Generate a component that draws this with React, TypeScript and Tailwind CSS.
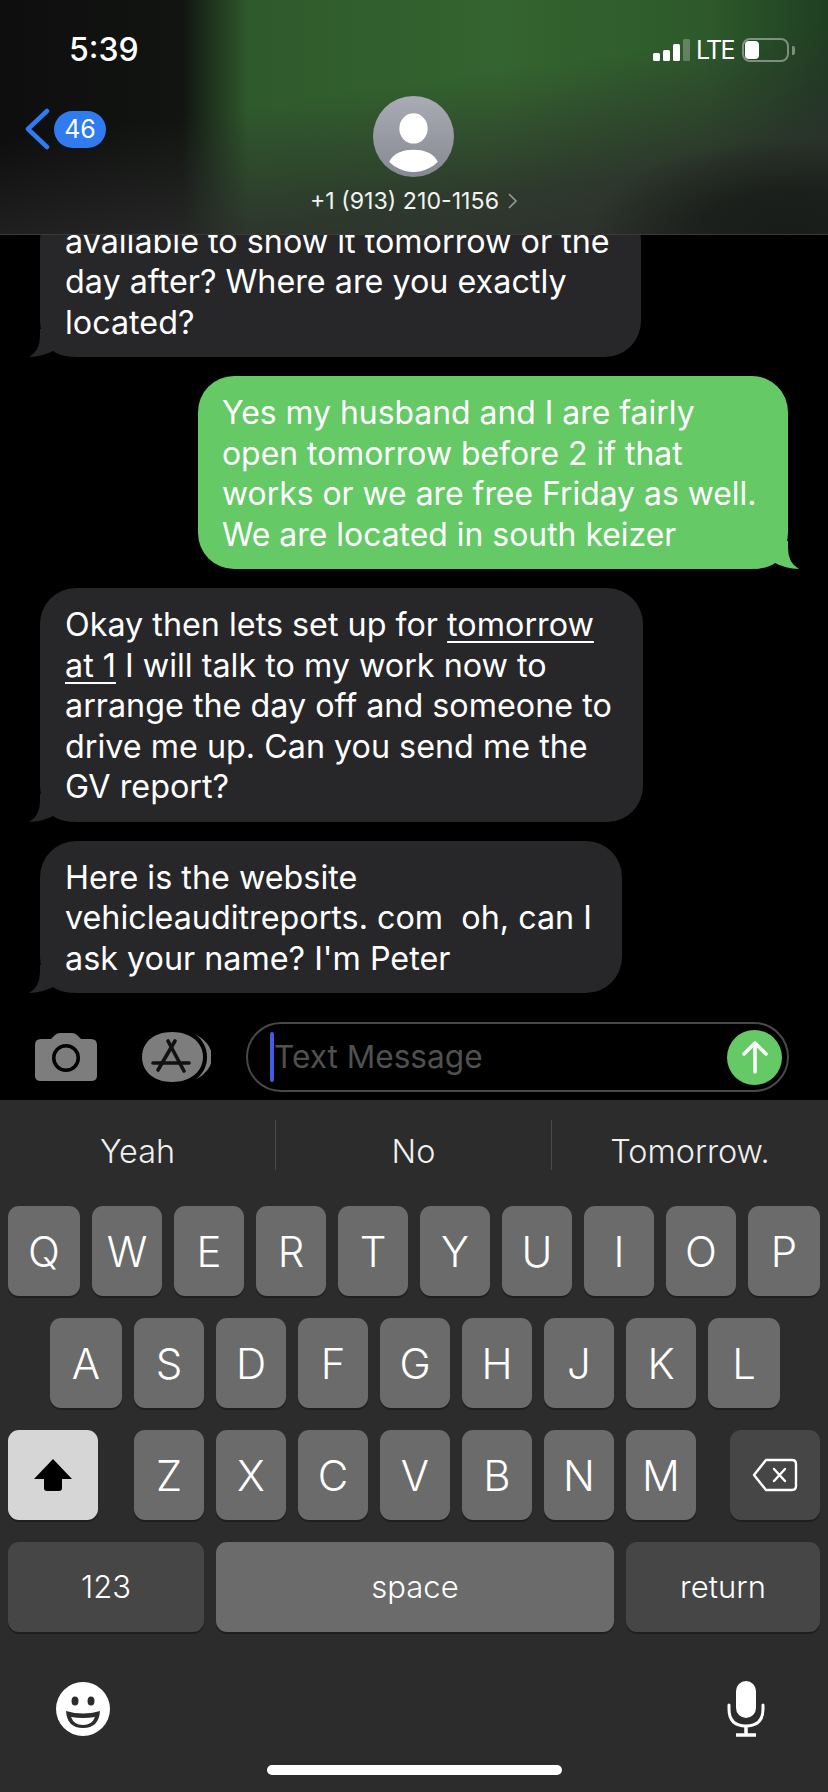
import type { ReactNode } from 'react';

const FONT = "font-['Inter','Liberation_Sans',sans-serif]";

const keyRows = {
  top: ['Q', 'W', 'E', 'R', 'T', 'Y', 'U', 'I', 'O', 'P'],
  middle: ['A', 'S', 'D', 'F', 'G', 'H', 'J', 'K', 'L'],
  bottom: ['Z', 'X', 'C', 'V', 'B', 'N', 'M'],
};

function Tail({ side, color }: { side: 'left' | 'right'; color: string }) {
  if (side === 'left') {
    return (
      <svg className="absolute left-[-11px] bottom-0 w-[44px] h-[28px]" viewBox="0 0 44 28">
        <path d="M11 0 V7 Q11 22 0 28 Q14 27.5 24 22 Q30 27 44 28 V0 Z" fill={color} />
      </svg>
    );
  }
  return (
    <svg className="absolute right-[-11px] bottom-0 w-[44px] h-[28px]" viewBox="0 0 44 28">
      <path d="M33 0 V7 Q33 22 44 28 Q30 27.5 20 22 Q14 27 0 28 V0 Z" fill={color} />
    </svg>
  );
}

function Bubble({ lines, width }: { lines: ReactNode[]; width: string }) {
  return (
    <div className={`relative ml-[40px] ${width} bg-[#272729] rounded-[36px] pl-[25px] pr-[24px] pt-[17px] pb-[14px]`}>
      <Tail side="left" color="#272729" />
      <div className="relative">
        {lines.map((line, i) => (
          <div key={i} className="whitespace-pre">
            {line}
          </div>
        ))}
      </div>
    </div>
  );
}

function Key({ label, wide }: { label: string; wide?: boolean }) {
  return (
    <div
      className={`${wide ? 'w-[72px]' : 'w-[70px]'} h-[90px] rounded-[11px] bg-[#6b6b6b] shadow-[0_2px_0_#1f1f1f] flex items-center justify-center text-[42px] font-light text-white`}
    >
      {label}
    </div>
  );
}

export default function App() {
  return (
    <div className={`${FONT} w-[828px] h-[1792px] bg-black flex flex-col overflow-hidden text-white`}>
      {/* Header */}
      <header className="h-[235px] shrink-0 border-b border-[#3a3a3a] bg-[radial-gradient(ellipse_200px_90px_at_790px_230px,rgba(24,28,24,0.95)_0%,rgba(24,28,24,0.8)_45%,rgba(24,28,24,0)_100%),linear-gradient(172deg,rgba(44,44,44,0)_40%,rgba(44,44,44,0.75)_75%,#2e2e2e_100%),linear-gradient(90deg,#0e0e0e_0%,#111411_22%,#2f5a2c_30%,#34642f_60%,#2e5a2b_85%,#1f3f22_100%)]">
        <div className="h-[98px] flex items-center justify-between pl-[69px] pr-[33px] pt-[2px]">
          <span className="text-[32px] font-medium leading-none">5:39</span>
          <div className="flex items-center">
            <div className="flex items-end gap-[3.5px] h-[22px]">
              <div className="w-[6.5px] h-[8px] rounded-[1.5px] bg-white" />
              <div className="w-[6.5px] h-[11px] rounded-[1.5px] bg-white" />
              <div className="w-[6.5px] h-[17px] rounded-[1.5px] bg-white" />
              <div className="w-[6.5px] h-[22px] rounded-[1.5px] bg-white/25" />
            </div>
            <span className="ml-[6px] text-[25px] leading-none tracking-[-1.6px]">LTE</span>
            <div className="ml-[8px] w-[47px] h-[24px] rounded-[8px] border-2 border-white/40 p-[1px]">
              <div className="w-[14px] h-full rounded-[4px] bg-white" />
            </div>
            <div className="ml-[3px] w-[3px] h-[9px] rounded-r-[2px] bg-white/40" />
          </div>
        </div>
        <div className="grid grid-cols-[1fr_auto_1fr] -mt-[2px]">
          <div className="flex items-center self-start pl-[24px] pt-[12px]">
            <svg className="w-[26px] h-[42px]" viewBox="0 0 26 42" fill="none">
              <path d="M23 3 L4 21 L23 39" stroke="#2f7bef" strokeWidth="4.5" strokeLinecap="round" strokeLinejoin="round" />
            </svg>
            <div className="ml-[4px] w-[52px] h-[37px] rounded-full bg-[#2f7bef] flex items-center justify-center text-[25px] leading-none">
              46
            </div>
          </div>
          <div className="flex flex-col items-center">
            <div className="w-[81px] h-[81px] rounded-full bg-[linear-gradient(180deg,#a9abb5_0%,#868892_100%)] overflow-hidden">
              <svg className="w-full h-full" viewBox="0 0 80 80" fill="#fff">
                <ellipse cx="40" cy="32" rx="14" ry="15" />
                <path d="M16 65 C20 56 30 53 40 53 C50 53 60 56 64 65 C58 71 50 75 40 75 C30 75 22 71 16 65 Z" />
              </svg>
            </div>
            <div className="mt-[11px] flex items-center text-[23.2px] leading-[26px] text-[#f2f2f2]">
              <span>+1 (913) 210-1156</span>
              <svg className="ml-[8px] w-[11px] h-[18px]" viewBox="0 0 11 18" fill="none">
                <path d="M2 2 L9 9 L2 16" stroke="#9a9a9a" strokeWidth="1.6" />
              </svg>
            </div>
          </div>
          <div />
        </div>
      </header>

      {/* Messages */}
      <main className="flex-1 min-h-0 overflow-hidden flex flex-col justify-end gap-[19px] pb-[21px] text-[32.3px] leading-[40.5px]">
        <Bubble
          width="w-[601px]"
          lines={['available to show it tomorrow or the', 'day after? Where are you exactly', 'located?']}
        />
        <div className="relative self-start ml-[198px] w-[590px] bg-[#65c966] rounded-[36px] pl-[24px] pt-[17px] pb-[14px] text-[31.9px]">
          <Tail side="right" color="#65c966" />
          <div className="relative">
            <div className="whitespace-pre">Yes my husband and I are fairly</div>
            <div className="whitespace-pre">open tomorrow before 2 if that</div>
            <div className="whitespace-pre">works or we are free Friday as well.</div>
            <div className="whitespace-pre">We are located in south keizer</div>
          </div>
        </div>
        <Bubble
          width="w-[603px]"
          lines={[
            <>
              Okay then lets set up for <span className="underline underline-offset-[5px] decoration-2">tomorrow</span>
            </>,
            <>
              <span className="underline underline-offset-[5px] decoration-2">at 1</span> I will talk to my work now to
            </>,
            'arrange the day off and someone to',
            'drive me up. Can you send me the',
            'GV report?',
          ]}
        />
        <Bubble
          width="w-[582px]"
          lines={['Here is the website', 'vehicleauditreports. com  oh, can I', "ask your name? I'm Peter"]}
        />
      </main>

      {/* Input row */}
      <div className="h-[86px] shrink-0 flex items-center pl-[35px] bg-black">
        <svg className="w-[62px] h-[48px] shrink-0" viewBox="0 0 62 48">
          <path
            fillRule="evenodd"
            fill="#7d7d7d"
            d="M6 6 H16 L20 2 Q22 0 25 0 H37 Q40 0 42 2 L46 6 H56 Q62 6 62 12 V43 Q62 48 56 48 H6 Q0 48 0 43 V12 Q0 6 6 6 Z M31 11 A14 14 0 1 0 31 39 A14 14 0 1 0 31 11 Z M31 14.5 A10.5 10.5 0 1 1 31 35.5 A10.5 10.5 0 1 1 31 14.5 Z"
          />
        </svg>
        <svg className="ml-[44px] w-[70px] h-[52px] shrink-0" viewBox="0 0 70 52">
          <path d="M54 3 C65 9 71 17 71 26 C71 35 65 43 54 49 C62 43 66 35 66 26 C66 17 62 9 54 3 Z" fill="#7d7d7d" />
          <path d="M31 1 C50 1 62 12 62 26 C62 40 50 51 31 51 C12 51 1 40 1 26 C1 12 12 1 31 1 Z" fill="#7d7d7d" />
          <g stroke="#111" strokeWidth="3.6" strokeLinecap="round" fill="none">
            <path d="M27 10 L43 40" />
            <path d="M34 10 L17 39" />
            <path d="M12 32 L48 32" />
          </g>
        </svg>
        <div className="ml-[35px] w-[543px] h-[70px] shrink-0 rounded-full border-2 border-[#484848] flex items-center pl-[22px] pr-[5px]">
          <div className="w-[4px] h-[50px] rounded-full bg-[#3f5fe0]" />
          <span className="flex-1 text-[31.6px] leading-none text-[#505050]">Text Message</span>
          <div className="w-[55px] h-[55px] rounded-full bg-[#65c966] flex items-center justify-center">
            <svg className="w-[28px] h-[34px]" viewBox="0 0 28 34" fill="none">
              <path d="M14 32 V3 M3 14 L14 3 L25 14" stroke="#fff" strokeWidth="3.5" strokeLinecap="round" strokeLinejoin="round" />
            </svg>
          </div>
        </div>
      </div>

      {/* Keyboard */}
      <section className="h-[692px] shrink-0 bg-[#2c2c2c]">
        <div className="h-[106px] grid grid-cols-3 items-center text-[32.4px] font-light text-[#f0f0f0] pb-[16px]">
          <div className="h-[50px] pt-[14px] flex items-center justify-center border-r border-[#4a4a4a]">Yeah</div>
          <div className="h-[50px] pt-[14px] flex items-center justify-center border-r border-[#4a4a4a]">No</div>
          <div className="h-[50px] pt-[14px] flex items-center justify-center">Tomorrow.</div>
        </div>
        <div className="flex flex-col gap-[22px] px-[8px]">
          <div className="flex gap-[12px]">
            {keyRows.top.map((k, i) => (
              <Key key={k} label={k} wide={i === 0 || i === 9} />
            ))}
          </div>
          <div className="flex gap-[12px] justify-center pl-[2px]">
            {keyRows.middle.map((k, i) => (
              <Key key={k} label={k} wide={i === 0 || i === 8} />
            ))}
          </div>
          <div className="flex justify-between">
            <div className="w-[90px] h-[90px] rounded-[11px] bg-[#d6d6d6] shadow-[0_2px_0_#1f1f1f] flex items-center justify-center">
              <svg className="w-[38px] h-[32px]" viewBox="0 0 38 32">
                <path d="M19 0 L38 20 H28 V29 Q28 32 25 32 H13 Q10 32 10 29 V20 H0 Z" fill="#000" />
              </svg>
            </div>
            <div className="flex gap-[12px] ml-[2px]">
              {keyRows.bottom.map((k) => (
                <Key key={k} label={k} />
              ))}
            </div>
            <div className="w-[90px] h-[90px] rounded-[11px] bg-[#464646] shadow-[0_2px_0_#1f1f1f] flex items-center justify-center">
              <svg className="w-[46px] h-[34px]" viewBox="0 0 46 34" fill="none" stroke="#fff" strokeWidth="2.4" strokeLinejoin="round" strokeLinecap="round">
                <path d="M14 2 H40 Q44 2 44 6 V28 Q44 32 40 32 H14 L2 17 Z" />
                <path d="M22 11 L33 23 M33 11 L22 23" />
              </svg>
            </div>
          </div>
          <div className="flex gap-[12px] text-[31px] font-light text-white">
            <div className="w-[196px] h-[90px] rounded-[11px] bg-[#464646] shadow-[0_2px_0_#1f1f1f] flex items-center justify-center">123</div>
            <div className="w-[398px] h-[90px] rounded-[11px] bg-[#6b6b6b] shadow-[0_2px_0_#1f1f1f] flex items-center justify-center">space</div>
            <div className="w-[194px] h-[90px] rounded-[11px] bg-[#464646] shadow-[0_2px_0_#1f1f1f] flex items-center justify-center">return</div>
          </div>
        </div>
        <div className="mt-[49px] flex items-center justify-between pl-[56px] pr-[63px]">
          <svg className="w-[54px] h-[54px]" viewBox="0 0 54 54">
            <circle cx="27" cy="27" r="27" fill="#fff" />
            <ellipse cx="19" cy="19" rx="3.5" ry="4.5" fill="#2c2c2c" />
            <ellipse cx="35" cy="19" rx="3.5" ry="4.5" fill="#2c2c2c" />
            <path d="M10 29 Q27 34 44 29 Q43 46 27 46 Q11 46 10 29 Z" fill="#2c2c2c" />
            <path d="M15 35 Q27 37 39 35 Q36 43 27 43 Q18 43 15 35 Z" fill="#fff" />
          </svg>
          <svg className="w-[38px] h-[56px]" viewBox="0 0 38 56" fill="none">
            <rect x="9" y="0" width="20" height="37" rx="10" fill="#fff" />
            <path d="M2 24 V28 Q2 45 19 45 Q36 45 36 28 V24" stroke="#fff" strokeWidth="3" strokeLinecap="round" />
            <path d="M19 45 V54 M9 54 H29" stroke="#fff" strokeWidth="3.5" />
          </svg>
        </div>
        <div className="mt-[28px] mx-auto w-[295px] h-[10px] rounded-full bg-white" />
      </section>
    </div>
  );
}
